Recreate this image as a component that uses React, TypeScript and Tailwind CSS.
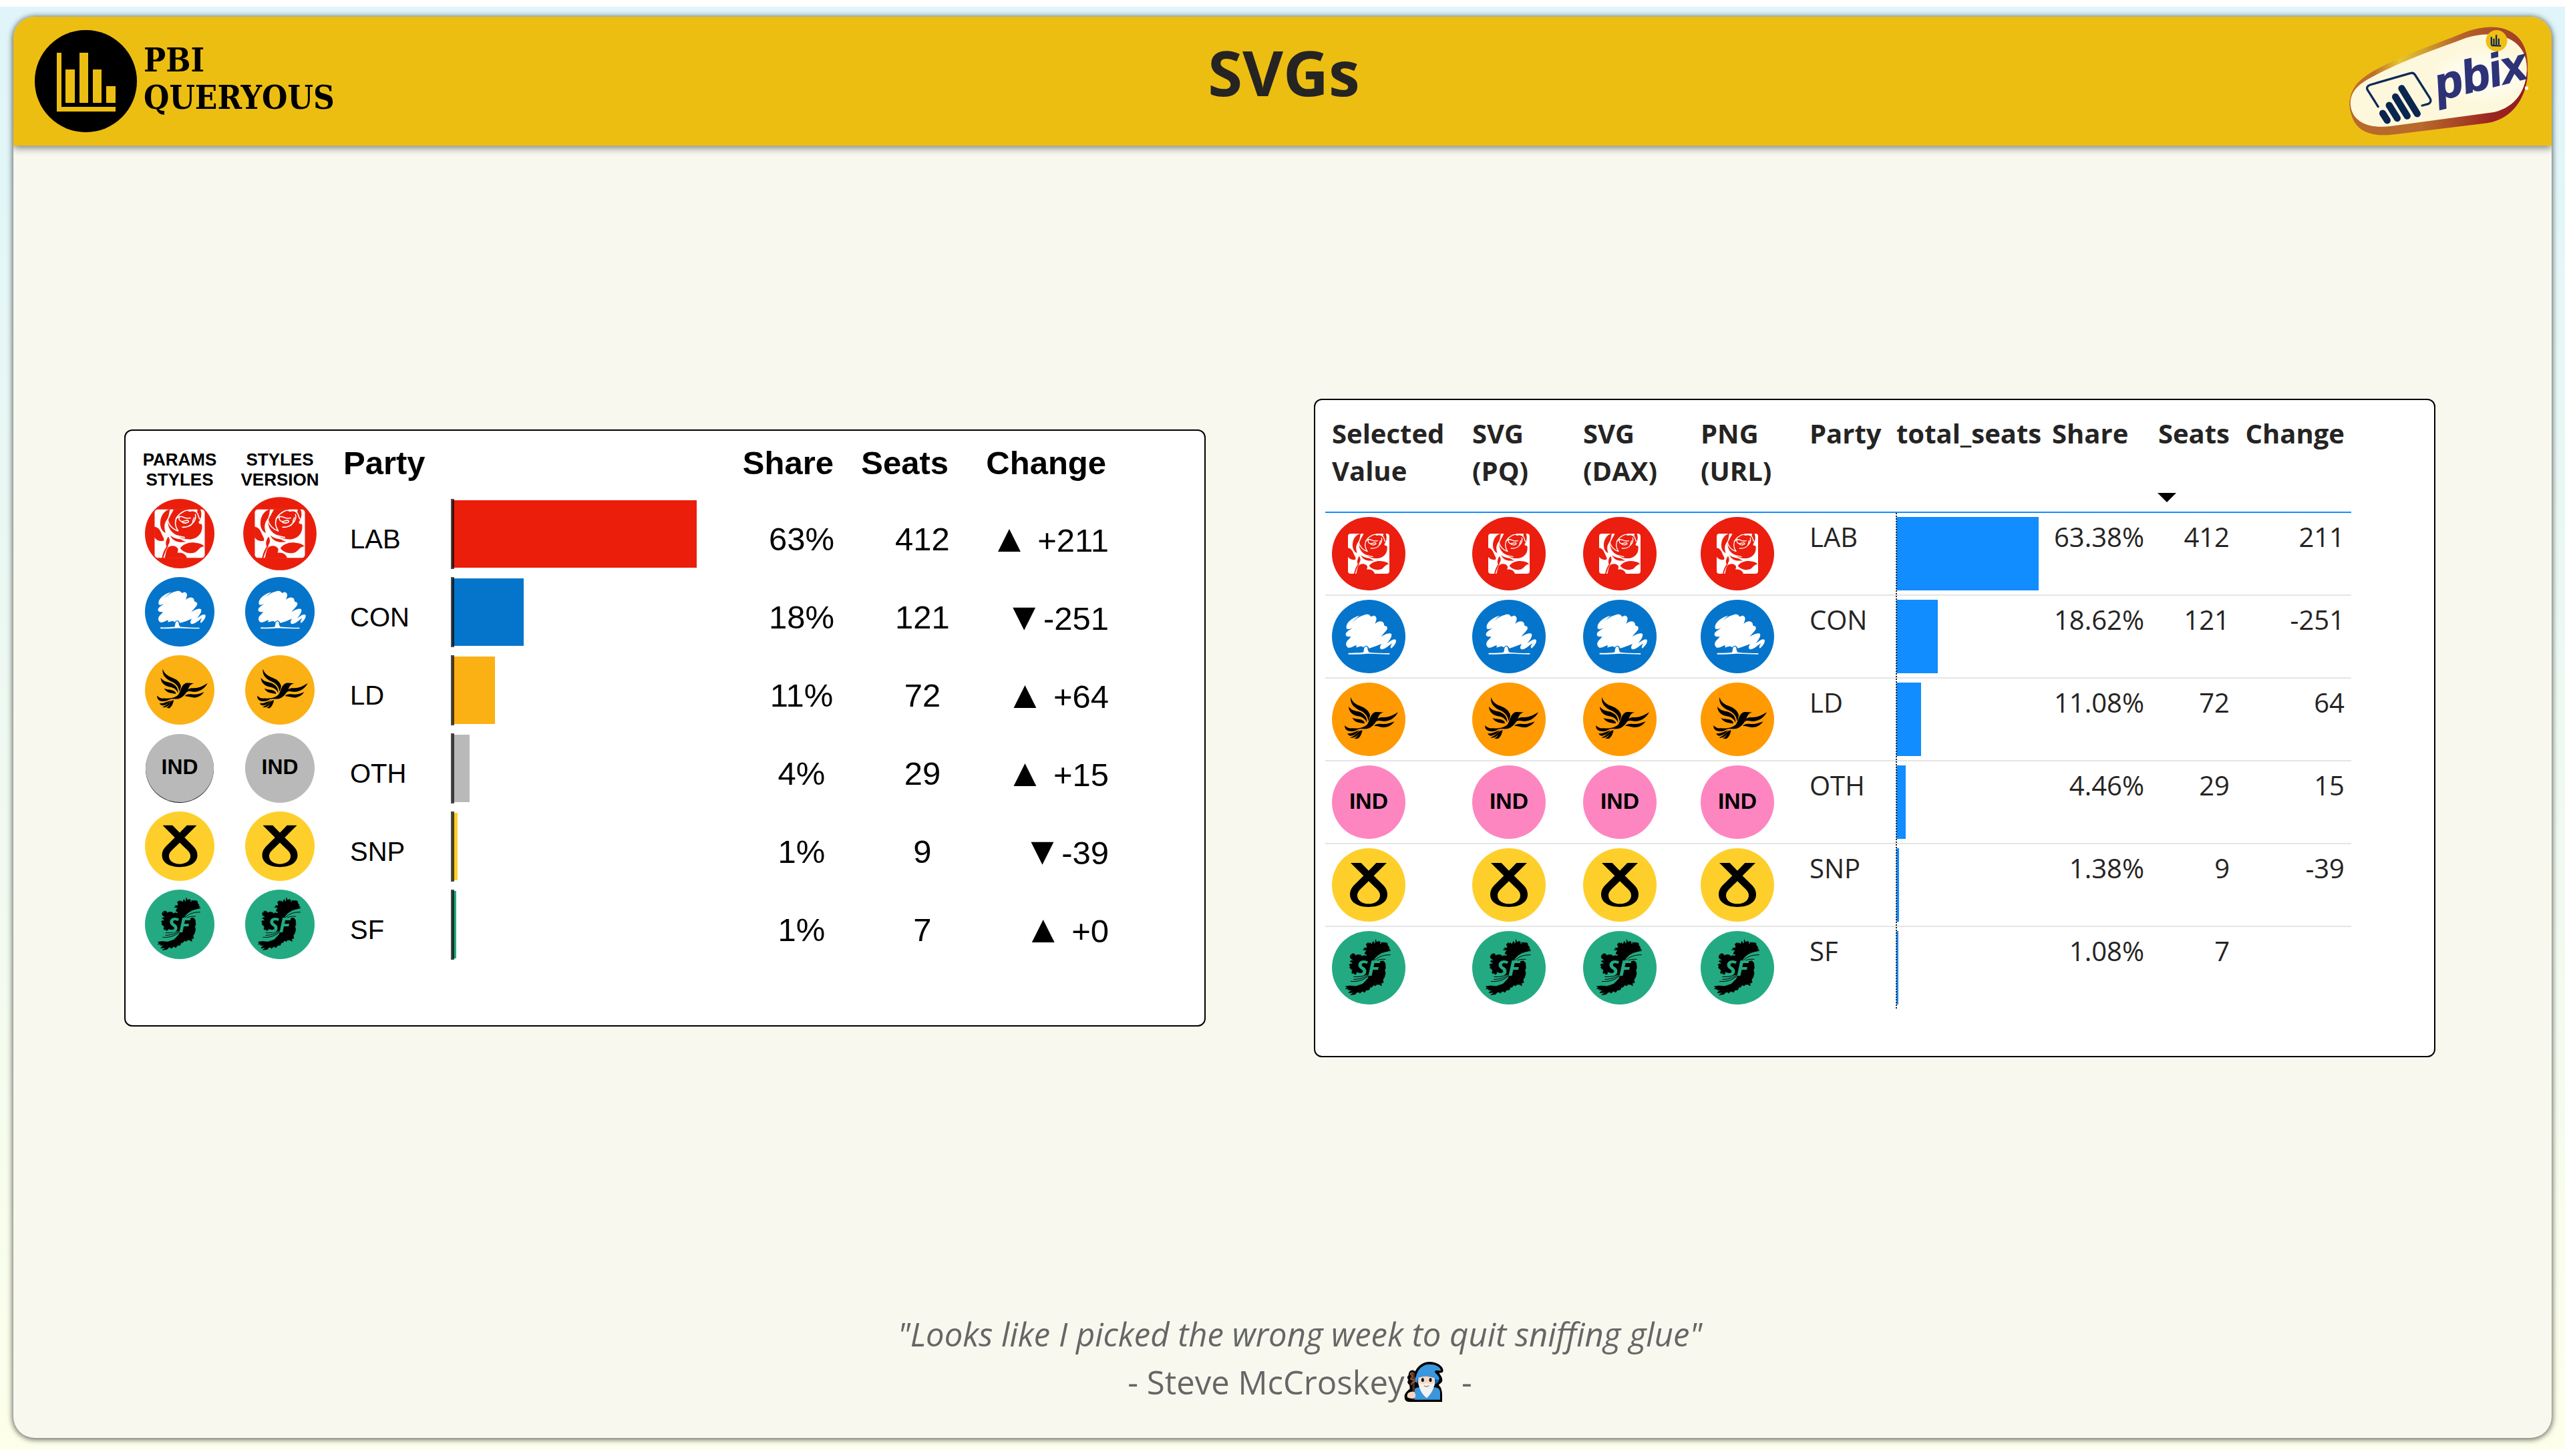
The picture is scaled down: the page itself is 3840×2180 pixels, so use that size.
import React from "react";

type PartyCode = "LAB" | "CON" | "LD" | "OTH" | "SNP" | "SF";

interface PartyRow {
  code: PartyCode;
  cardColor: string;
  tableColor: string;
  seats: number;
  cardShare: string;
  arrow: string;
  cardChange: string;
  share: string;
  change: string;
}

const MAX_SEATS = 412;

const PARTIES: PartyRow[] = [
  { code: "LAB", cardColor: "#EB1E0C", tableColor: "#EB1E0F", seats: 412, cardShare: "63%", arrow: "▲", cardChange: " +211", share: "63.38%", change: "211" },
  { code: "CON", cardColor: "#0575CB", tableColor: "#0575CB", seats: 121, cardShare: "18%", arrow: "▼", cardChange: "-251", share: "18.62%", change: "-251" },
  { code: "LD", cardColor: "#FBB014", tableColor: "#FF9A03", seats: 72, cardShare: "11%", arrow: "▲", cardChange: " +64", share: "11.08%", change: "64" },
  { code: "OTH", cardColor: "#B9B9B9", tableColor: "#FD86C0", seats: 29, cardShare: "4%", arrow: "▲", cardChange: " +15", share: "4.46%", change: "15" },
  { code: "SNP", cardColor: "#FECF2B", tableColor: "#FECF2B", seats: 9, cardShare: "1%", arrow: "▼", cardChange: "-39", share: "1.38%", change: "-39" },
  { code: "SF", cardColor: "#24AA82", tableColor: "#24AA82", seats: 7, cardShare: "1%", arrow: "▲", cardChange: " +0", share: "1.08%", change: "" },
];

/* Each glyph is drawn round its own centre and moved to the origin of the badge. */
function RoseGlyph({ color }: { color: string }) {
  return (
    <g transform="translate(-192 -183)">
      <rect x="99" y="93" width="186" height="180" rx="12" fill="#fff" />
      <g fill={color}>
        <path d="M156 92 C132 98 118 122 120 150 C122 166 130 177 140 180 C133 160 134 144 147 128 C153 115 153 104 156 92Z" />
        <path d="M170 92 C163 108 151 124 148 140 C150 162 158 172 170 182 C188 197 212 206 234 204 C262 199 277 180 275 152 C273 143 266 152 262 141 C274 124 275 106 268 92 L257 92 C259 97 258 102 254 104 C246 98 238 98 228 101 C224 98 224 94 222 92Z" />
        <path d="M157 189 C164 208 184 219 217 213 C205 210 200 206 196 204 C180 202 166 198 157 189Z" />
        <path d="M98 157 C117 160 120 174 126 186 C130 196 138 205 131 210 C116 212 104 207 98 196Z" />
        <path d="M150 194 C140 206 138 222 144 232 C153 222 160 210 150 194Z" />
        <path d="M126 274 C129 256 136 240 147 226 L150 228 C142 242 135 258 131 274Z" />
        <path d="M136 274 C140 262 140 250 146 238 C156 224 180 226 186 240 C187 247 183 252 184 254 C200 251 216 259 219 274Z" />
        <path d="M194 237 C206 220 232 213 250 217 C264 218 276 222 283 230 C266 231 262 246 248 253 C230 259 205 254 194 237Z" />
      </g>
      <g fill="none" stroke="#fff" strokeWidth="4" strokeLinecap="round" strokeLinejoin="round">
        <path d="M147 130 C152 152 164 166 186 173 C178 160 176 150 176 144 C176 128 184 112 208 100 C216 96 222 96 228 99 C240 96 250 98 256 106 C262 112 262 124 266 128" />
        <path d="M178 127 C186 120 198 118 206 122 C214 128 222 126 232 125" />
        <path d="M191 118 C187 126 190 136 200 138 C210 138 216 132 222 134 C227 138 226 141 218 142 C212 146 208 144 202 141" />
        <path d="M250 112 C254 126 248 136 240 144 C234 154 218 160 202 159" />
        <path d="M152 178 C168 190 190 192 210 197" />
        <path d="M246 124 C240 134 240 142 240 144" />
      </g>
    </g>
  );
}

function TreeGlyph() {
  return (
    <g transform="translate(-192 -555)" fill="#fff">
      <path d="M93 520 C88 506 98 490 115 478 C128 468 142 463 151 461 C138 472 124 484 117 494 C130 480 150 464 168 460 C180 455 193 452 200 464 C206 469 211 459 218 462 C230 468 229 478 220 498 C234 485 254 482 260 496 C262 504 261 508 268 508 C278 510 278 522 268 532 L247 556 C262 547 286 535 294 544 C298 557 284 574 274 586 C290 574 306 562 314 570 C318 582 306 598 294 608 C287 605 291 596 298 586 C284 592 264 617 247 612 C239 606 244 596 250 588 C234 594 212 604 194 608 C190 600 184 595 178 597 C172 599 172 602 168 604 C160 595 148 602 135 605 C138 601 138 599 136 594 C120 601 104 611 96 602 C86 590 90 578 104 566 L113 556 C100 556 92 556 89 548 C88 536 100 529 120 517 C108 522 97 524 93 520Z" />
      <path d="M173 606 C176 598 184 598 187 606 C187 616 190 622 194 626 C220 629 255 630 285 630 Q288 633 285 635 C240 635 205 631 180 633 C150 635 125 636 102 635 Q98 632 102 629 C125 630 150 628 168 626 C171 620 170 612 173 606Z" />
    </g>
  );
}

function BirdGlyph() {
  return (
    <g transform="translate(-192 -927)" fill="#000">
      <path d="M112 827 C117 848 134 860 155 868 C180 877 194 892 198 908 C197 920 193 930 190 935 C188 912 176 898 155 888 C128 877 106 856 112 827Z" />
      <path d="M102 869 C112 884 126 888 145 892 C168 898 186 914 184 942 C176 922 160 915 140 912 C118 907 102 890 102 869Z" />
      <path d="M118 920 C130 926 150 925 160 929 C170 933 176 940 173 946 C158 942 132 945 118 920Z" />
      <path d="M260 895 C248 898 241 904 236 914 C226 942 206 967 180 970 C165 971 152 968 140 974 C128 982 105 984 94 976 C86 970 84 962 85 954 C93 964 105 969 120 967 C150 970 176 962 187 948 C198 928 200 903 220 895 C232 892 246 896 260 895Z" />
      <path d="M324 895 C314 916 292 934 264 936 C250 938 240 927 220 939 C227 924 240 917 255 918 C285 920 308 904 324 895Z" />
      <path d="M308 937 C293 957 270 967 250 962 C240 960 228 956 216 956 C225 946 240 946 252 948 C275 950 290 943 308 937Z" />
      <path d="M97 990 C112 993 130 984 150 976 C142 988 126 1001 110 1001 C102 1000 98 995 97 990Z" />
      <path d="M110 1008 C125 1005 136 990 154 978 C148 993 138 1005 125 1009 C118 1011 112 1010 110 1008Z" />
      <path d="M127 1013 C140 1008 146 992 152 979 C158 976 166 975 163 980 C160 992 154 1008 142 1014 C136 1014 130 1014 127 1013Z" />
    </g>
  );
}

function IndGlyph() {
  return (
    <text x="0" y="29" textAnchor="middle" fontSize="101" fontWeight="700" fill="#000" className="font-['Liberation_Sans',sans-serif]">
      IND
    </text>
  );
}

function RibbonGlyph() {
  return (
    <g transform="translate(-192 -171)">
      <path
        fill="#000"
        fillRule="evenodd"
        d="M111 72 L158 72 L192 107 L226 72 L273 72 L215 130 L256 170 C270 184 276 198 276 214 C276 250 240 270 192 270 C144 270 108 250 108 214 C108 198 114 184 128 170 L169 130Z M192 154 L155 190 C145 200 141 208 141 218 C141 241 165 256 192 256 C219 256 243 241 243 218 C243 208 239 200 229 190Z"
      />
    </g>
  );
}

function MapGlyph({ color }: { color: string }) {
  return (
    <g transform="translate(-192 -543)">
      <path
        fill="#000"
        stroke="#000"
        strokeWidth="2"
        strokeLinejoin="round"
        d="M223 416 L228 428 L238 424 L243 427 L243 436 L250 438 L248 430 L262 430 L275 432 L278 444 L284 450 L282 457 L289 460 L278 468 L250 474 L232 486 L220 500 L214 516 L258 512 L266 522 L268 545 L264 552 L267 568 L263 585 L256 596 L258 610 L248 612 L250 624 L240 618 L228 618 L222 625 L215 620 L204 632 L200 628 L194 642 L180 644 L174 654 L164 648 L152 658 L148 652 L138 654 L132 662 L110 665 L120 658 L124 654 L102 656 L108 648 L120 644 L98 642 L104 636 L88 638 L96 632 L88 627 L108 624 L135 626 L165 616 L188 592 L195 574 L150 574 L132 570 L130 574 L124 566 L118 570 L116 560 L120 556 L112 548 L106 542 L110 536 L104 530 L112 524 L118 528 L118 520 L108 514 L116 510 L122 512 L120 506 L112 502 L108 494 L112 484 L116 496 L116 480 L128 480 L132 488 L144 484 L158 486 L160 492 L170 488 L182 490 L184 484 L174 480 L178 470 L184 464 L166 462 L176 458 L170 454 L184 454 L184 444 L180 438 L190 430 L194 436 L198 430 L206 438 L212 424 L218 436 L222 430Z"
      />
      <g fill="none" stroke={color} strokeWidth="5">
        <path d="M292 476 C256 474 228 492 212 518" />
        <path d="M288 492 C250 492 232 502 218 516" />
      </g>
      <g fill="none" stroke="#000" strokeWidth="3">
        <path d="M291 466 C250 470 222 490 210 512" />
        <path d="M290 485 C252 484 228 498 215 514" />
        <path d="M268 505 C245 503 228 508 216 518" />
        <path d="M111 604 C150 608 184 592 197 570" />
        <path d="M124 583 C152 586 182 578 195 566" />
        <path d="M124 595 C152 596 184 584 197 568" />
      </g>
      <text x="136" y="580" fontSize="98" fontWeight="700" fontStyle="italic" fill={color} className="font-['Open_Sans',sans-serif]">
        SF
      </text>
    </g>
  );
}

function PartyIcon({ code, color, radius = 165, scale = 1, outline = false, className }: {
  code: PartyCode;
  color: string;
  radius?: number;
  scale?: number;
  outline?: boolean;
  className: string;
}) {
  return (
    <svg viewBox="-165 -165 330 330" className={className} role="img" aria-label={`${code} logo`}>
      {outline && <circle cx="0" cy="3" r={radius} fill="#111" />}
      <circle r={radius} fill={color} />
      <g transform={`scale(${scale})`}>
        {code === "LAB" && <RoseGlyph color={color} />}
        {code === "CON" && <TreeGlyph />}
        {code === "LD" && <BirdGlyph />}
        {code === "OTH" && <IndGlyph />}
        {code === "SNP" && <RibbonGlyph />}
        {code === "SF" && <MapGlyph color={color} />}
      </g>
    </svg>
  );
}

function QueryousLogo() {
  return (
    <div className="flex items-center gap-2.5">
      <svg viewBox="0 0 153 153" className="size-[153px]" aria-hidden="true">
        <circle cx="76.5" cy="76.5" r="76.5" fill="#000" />
        <g fill="#EDBE12">
          <path d="M33 34h7v81h81v7H33z" />
          <rect x="46" y="59" width="14" height="50" />
          <rect x="67" y="34" width="13" height="75" />
          <rect x="87" y="59" width="13" height="50" />
          <rect x="107" y="84" width="14" height="25" />
        </g>
      </svg>
      <p className="pb-2 font-['DejaVu_Serif_Condensed','DejaVu_Serif',serif] text-[49px] leading-[56px] font-bold text-black">
        PBI
        <br />
        QUERYOUS
      </p>
    </div>
  );
}

function PbixLogo() {
  return (
    <svg viewBox="225 110 830 510" className="h-[170px] w-[277px] overflow-visible" role="img" aria-label="pbix">
      <defs>
        <linearGradient id="pbix-rim" x1="0" y1="0" x2="1" y2="0">
          <stop offset="0" stopColor="#BC6B28" />
          <stop offset="0.14" stopColor="#C0702B" />
          <stop offset="0.28" stopColor="#E6C433" />
          <stop offset="0.42" stopColor="#D0A02E" />
          <stop offset="0.6" stopColor="#B8662A" />
          <stop offset="1" stopColor="#A03A24" />
        </linearGradient>
        <linearGradient id="pbix-base" x1="0" y1="0" x2="1" y2="0">
          <stop offset="0" stopColor="#B86A2A" />
          <stop offset="0.4" stopColor="#B86A2A" />
          <stop offset="0.8" stopColor="#9A2420" />
          <stop offset="1" stopColor="#941A20" />
        </linearGradient>
        <radialGradient id="pbix-face" cx="0.75" cy="0.45" r="0.5">
          <stop offset="0" stopColor="#FFFFFF" />
          <stop offset="0.6" stopColor="#FDF8DC" />
        </radialGradient>
      </defs>
      <path fill="url(#pbix-rim)" d="M232 470 C232 400 270 358 340 318 C470 245 640 190 760 140 C900 92 1035 130 1032 300 C1030 400 980 470 900 500 L440 560 C330 580 232 560 232 470Z" />
      <path fill="url(#pbix-base)" d="M232 450 C232 590 320 618 440 602 L850 552 C960 535 1030 440 1032 320 L900 400 L400 500Z" />
      <path fill="url(#pbix-face)" d="M236 460 C240 400 280 372 350 336 C480 268 640 212 760 168 C890 128 1025 170 1028 300 C1030 400 980 480 880 503 L420 565 C310 580 236 540 236 460Z" />
      <path fill="none" stroke="#102A56" strokeWidth="10" strokeLinecap="round" d="M360 478 L312 402 Q306 386 325 380 L505 328 Q518 324 526 335 L593 440 Q602 458 585 466 L558 473" />
      <g stroke="#0A2550" strokeWidth="31" strokeLinecap="round">
        <path d="M381 508 L401 540" />
        <path d="M410 472 L446 530" />
        <path d="M438 434 L491 520" />
        <path d="M466 396 L536 510" />
      </g>
      <circle cx="892" cy="182" r="48" fill="#EFBF14" />
      <g stroke="#102A56" strokeWidth="7">
        <path d="M869 165V200" />
        <path d="M880 172V200" />
        <path d="M891 156V200" />
        <path d="M902 172V200" />
        <path d="M868 203L912 205" />
      </g>
      <text x="0" y="0" transform="translate(632 450) rotate(-14)" fontSize="204" fontWeight="700" fontStyle="italic" fill="#2E3277" stroke="#2E3277" strokeWidth="5" className="font-['Liberation_Sans',sans-serif]">
        pbix
      </text>
      <circle cx="1027" cy="395" r="8" fill="#fff" />
    </svg>
  );
}

function Wizard() {
  return (
    <svg viewBox="1226 55 180 184" className="inline-block h-[62px] w-[60px]" role="img" aria-label="wizard">
      <path fill="#000" d="M1276 100 C1288 74 1312 57 1340 57 C1372 57 1400 74 1402 96 C1401 106 1394 108 1384 106 C1384 112 1398 122 1398 140 C1397 152 1386 154 1382 160 C1384 168 1392 170 1393 180 C1398 194 1397 206 1397 237 L1250 237 C1234 236 1228 228 1228 212 C1228 200 1238 190 1252 178 L1250 160 C1240 156 1240 142 1246 138 C1238 130 1240 122 1246 118 C1246 96 1262 88 1276 100Z" />
      <path fill="#0063B1" d="M1274 130 C1285 115 1370 112 1382 124 C1388 134 1384 150 1366 158 L1290 158Z" />
      <path fill="#3A96DD" d="M1280 122 C1286 90 1310 68 1340 68 C1366 68 1388 78 1392 96 C1380 98 1366 92 1364 100 C1364 110 1380 114 1384 132 C1380 142 1372 140 1364 130 C1340 120 1310 122 1288 130 L1282 152 C1274 146 1274 132 1280 122Z" />
      <path fill="#3A96DD" d="M1272 180 Q1280 172 1290 172 L1366 172 Q1388 174 1388 196 L1388 227 L1272 227Z" />
      <rect x="1263" y="104" width="11" height="123" fill="#4D2B22" />
      <path fill="none" stroke="#8E562E" strokeWidth="7" strokeLinecap="round" d="M1264 108 Q1252 106 1256 114 Q1272 120 1258 130 Q1252 138 1270 136 Q1280 146 1264 150 L1258 158" />
      <path fill="#F7D7C4" d="M1290 128 Q1328 116 1364 130 L1362 164 L1292 164Z" />
      <path fill="#F2F2F2" d="M1290 130 L1294 152 Q1308 160 1318 155 Q1328 150 1338 155 Q1350 160 1360 152 L1364 132 C1368 170 1346 204 1328 220 C1306 204 1286 170 1290 130Z" />
      <g fill="#000">
        <rect x="1304" y="130" width="11" height="17" rx="5" />
        <rect x="1339" y="130" width="11" height="17" rx="5" />
      </g>
      <path fill="none" stroke="#B08060" strokeWidth="4" strokeLinecap="round" d="M1317 164 Q1327 172 1337 164" />
      <path fill="#F7D7C4" d="M1240 206 C1242 194 1256 190 1272 192 Q1282 206 1274 220 Q1256 226 1240 216Z" />
    </svg>
  );
}

function StyledCard() {
  return (
    <section className="overflow-hidden rounded-xl border-2 border-black bg-white pb-[92px] font-['Liberation_Sans',sans-serif] text-black">
      <table className="table-fixed border-collapse whitespace-nowrap">
        <colgroup>
          <col className="w-[162px]" />
          <col className="w-[138px]" />
          <col className="w-[187px]" />
          <col className="w-[425px]" />
          <col className="w-[152px]" />
          <col className="w-[172px]" />
          <col className="w-[236px]" />
        </colgroup>
        <thead>
          <tr className="h-24 text-[49px] leading-[56px] font-bold">
            <th scope="col" className="pt-5 text-center text-[26px] leading-[30px]">PARAMS<br />STYLES</th>
            <th scope="col" className="pt-5 text-center text-[26px] leading-[30px]">STYLES<br />VERSION</th>
            <th scope="col" className="pl-[26px] text-left">Party</th>
            <th aria-label="Seats bar" />
            <th scope="col" className="pr-1 text-right">Share</th>
            <th scope="col" className="pr-1 text-right">Seats</th>
            <th scope="col" className="pr-1 text-right">Change</th>
          </tr>
        </thead>
        <tbody>
          {PARTIES.map((p) => (
            <tr key={p.code} className="h-[117px] text-[49px] leading-[56px]">
              <td>
                <PartyIcon
                  code={p.code}
                  color={p.cardColor}
                  scale={p.code === "LAB" ? 1.28 : 1}
                  radius={p.code === "OTH" ? 162 : 165}
                  outline={p.code === "OTH"}
                  className="mx-auto block size-[104px]"
                />
              </td>
              <td>
                <PartyIcon
                  code={p.code}
                  color={p.cardColor}
                  scale={p.code === "LAB" ? 1.28 : 1}
                  radius={p.code === "LAB" ? 174 : 165}
                  className="mx-auto block size-[104px] overflow-visible"
                />
              </td>
              <td className="pt-4 pl-9 text-[40px]">{p.code}</td>
              <td>
                <div className="relative flex h-[105px] items-center pl-0.5">
                  <div className="h-[101px]" style={{ width: Math.round((p.seats / MAX_SEATS) * 366), backgroundColor: p.cardColor }} />
                  <div className="absolute inset-y-0 left-0 w-[5px] bg-black/70" />
                </div>
              </td>
              <td className="pt-4 pl-12 text-center">{p.cardShare}</td>
              <td className="pt-4 pr-0.5 pl-[88px] text-center">{p.seats}</td>
              <td className="pt-4 text-right whitespace-pre">
                <span className="text-[58px]">{p.arrow}</span>
                {p.cardChange}
              </td>
            </tr>
          ))}
        </tbody>
      </table>
    </section>
  );
}

function SeatsTable() {
  return (
    <section className="overflow-hidden rounded-xl border-2 border-black bg-white px-[15px] pb-[69px] font-['Open_Sans',sans-serif] text-[#252423]">
      <table className="table-fixed border-collapse whitespace-nowrap">
        <colgroup>
          <col className="w-[210px]" />
          <col className="w-[166px]" />
          <col className="w-[176px]" />
          <col className="w-[163px]" />
          <col className="w-[130px]" />
          <col className="w-[233px]" />
          <col className="w-[158px]" />
          <col className="w-[128px]" />
          <col className="w-[172px]" />
        </colgroup>
        <thead>
          <tr className="h-[168px] border-b-2 border-[#118DFF] text-left align-top text-[40px] leading-[56px] font-bold">
            <th scope="col" className="px-2.5 pt-[22px]">Selected<br />Value</th>
            <th scope="col" className="px-2.5 pt-[22px]">SVG<br />(PQ)</th>
            <th scope="col" className="px-2.5 pt-[22px]">SVG<br />(DAX)</th>
            <th scope="col" className="px-2.5 pt-[22px]">PNG<br />(URL)</th>
            <th scope="col" className="px-2.5 pt-[22px]">Party</th>
            <th scope="col" className="pt-[22px] pl-2.5">total_seats</th>
            <th scope="col" className="px-2.5 pt-[22px]">Share</th>
            <th scope="col" aria-sort="descending" className="relative px-2.5 pt-[22px] text-right">
              Seats
              <svg viewBox="0 0 28 14" className="absolute bottom-3.5 left-2.5 h-3.5 w-7" aria-hidden="true">
                <path d="M0 0H28L14 14Z" fill="#000" />
              </svg>
            </th>
            <th scope="col" className="px-2.5 pt-[22px] text-right">Change</th>
          </tr>
        </thead>
        <tbody>
          {PARTIES.map((p) => (
            <tr key={p.code} className="h-[124px] border-b-2 border-[#E5E5E5] align-top text-[40px] leading-[56px] last:border-transparent">
              {["Selected Value", "SVG (PQ)", "SVG (DAX)", "PNG (URL)"].map((source) => (
                <td key={source} className="py-1.5 pl-2.5">
                  <PartyIcon code={p.code} color={p.tableColor} className="block size-[110px]" />
                </td>
              ))}
              <td className="px-2.5 pt-2">{p.code}</td>
              <td className="relative py-1.5 pl-2.5">
                <div className="h-[110px] bg-[#118DFF]" style={{ width: Math.max(2, Math.floor((p.seats / MAX_SEATS) * 213)) }} />
                <div className="absolute inset-y-0 left-[9px] border-l-2 border-dotted border-[#252423]" />
              </td>
              <td className="px-2.5 pt-2 text-right">{p.share}</td>
              <td className="px-2.5 pt-2 text-right">{p.seats}</td>
              <td className="px-2.5 pt-2 text-right">{p.change}</td>
            </tr>
          ))}
        </tbody>
      </table>
    </section>
  );
}

export default function App() {
  return (
    <div className="flex min-h-screen flex-col bg-white py-2.5">
      <div className="flex flex-1 flex-col bg-linear-to-b from-[#DFF5F9] via-[#EEF9F1] to-[#FDFFEA] px-5 pt-[15px] pb-[17px]">
        <div className="flex flex-1 flex-col overflow-hidden rounded-[32px] bg-[#F8F8EF] shadow-[0_1px_8px_1px_rgba(0,0,0,0.65)]">
          <header className="grid h-[193px] grid-cols-[1fr_auto_1fr] items-center bg-[#EDBE12] pr-7 pl-8 shadow-[0_4px_10px_rgba(0,0,0,0.45)]">
            <QueryousLogo />
            <h1 className="pb-7 font-['Open_Sans',sans-serif] text-[94px] leading-[128px] font-bold text-[#252423]">SVGs</h1>
            <div className="flex justify-end">
              <PbixLogo />
            </div>
          </header>
          <main className="grid flex-1 grid-cols-[1619fr_1679fr] items-center gap-x-[162px] pr-[174px] pl-[166px]">
            <StyledCard />
            <SeatsTable />
          </main>
          <footer className="pb-12 pl-[52px] text-center font-['Open_Sans',sans-serif] text-[49px] leading-[72px] text-[#666666]">
            <p className="italic">"Looks like I picked the wrong week to quit sniffing glue"</p>
            <p className="flex items-center justify-center whitespace-pre">
              - Steve McCroskey
              <Wizard />
              {"  -"}
            </p>
          </footer>
        </div>
      </div>
    </div>
  );
}
